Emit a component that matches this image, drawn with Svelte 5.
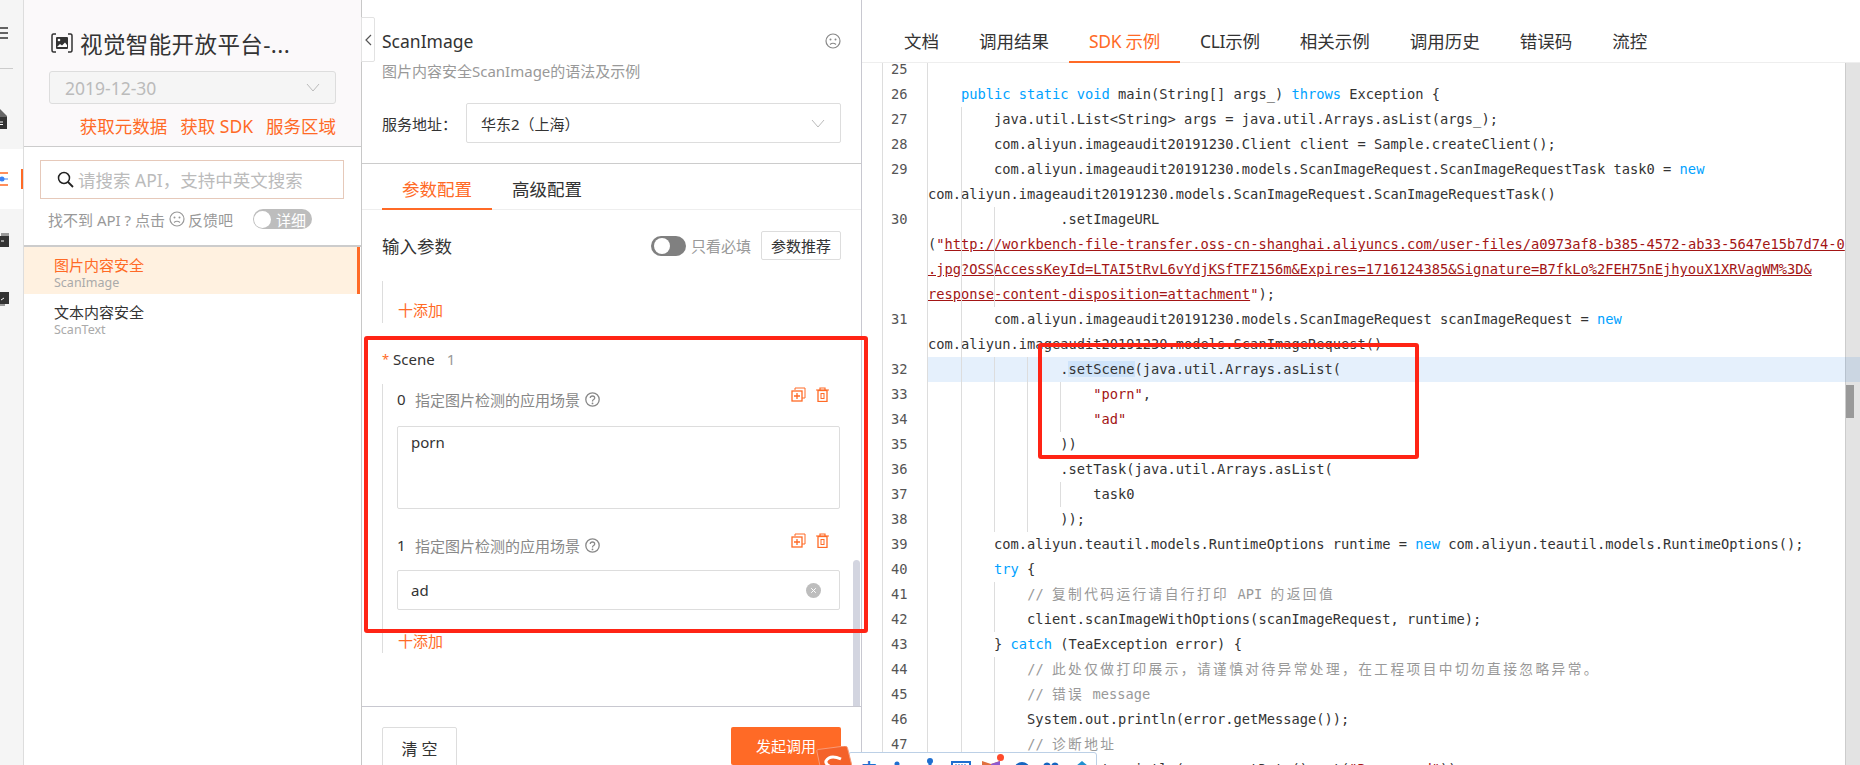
<script>
	const tabs = ['文档', '调用结果', 'SDK 示例', 'CLI示例', '相关示例', '调用历史', '错误码', '流控'];

	const url1 = 'http://workbench-file-transfer.oss-cn-shanghai.aliyuncs.com/user-files/a0973af8-b385-4572-ab33-5647e15b7d74-0';
	const url2 = '.jpg?OSSAccessKeyId=LTAI5tRvL6vYdjKSfTFZ156m&Expires=1716124385&Signature=B7fkLo%2FEH75nEjhyouX1XRVagWM%3D&';
	const url3 = 'response-content-disposition=attachment';

	// n: line number, g: indent guides, t: [class, text] tokens
	const rows = [
		{ n: 25, g: [], t: [] },
		{ n: 26, g: [], t: [['', '    '], ['k', 'public static void'], ['', ' main(String[] args_) '], ['k', 'throws'], ['', ' Exception {']] },
		{ n: 27, g: [1], t: [['', '        java.util.List<String> args = java.util.Arrays.asList(args_);']] },
		{ n: 28, g: [1], t: [['', '        com.aliyun.imageaudit20191230.Client client = Sample.createClient();']] },
		{ n: 29, g: [1], t: [['', '        com.aliyun.imageaudit20191230.models.ScanImageRequest.ScanImageRequestTask task0 = '], ['k', 'new']] },
		{ n: '', g: [1], t: [['', 'com.aliyun.imageaudit20191230.models.ScanImageRequest.ScanImageRequestTask()']] },
		{ n: 30, g: [1, 2], t: [['', '                .setImageURL']] },
		{ n: '', g: [1, 2], t: [['', '('], ['s', '"'], ['u', url1]] },
		{ n: '', g: [1, 2], t: [['u', url2]] },
		{ n: '', g: [1, 2], t: [['u', url3], ['s', '"'], ['', ');']] },
		{ n: 31, g: [1], t: [['', '        com.aliyun.imageaudit20191230.models.ScanImageRequest scanImageRequest = '], ['k', 'new']] },
		{ n: '', g: [1], t: [['', 'com.aliyun.imageaudit20191230.models.ScanImageRequest()']] },
		{ n: 32, g: [1, 2, 3], on: true, t: [['', '                .'], ['sel', 'setScene'], ['', '(java.util.Arrays.asList(']] },
		{ n: 33, g: [1, 2, 3, 4], t: [['', '                    '], ['s', '"porn"'], ['', ',']] },
		{ n: 34, g: [1, 2, 3, 4], t: [['', '                    '], ['s', '"ad"']] },
		{ n: 35, g: [1, 2, 3], t: [['', '                ))']] },
		{ n: 36, g: [1, 2, 3], t: [['', '                .setTask(java.util.Arrays.asList(']] },
		{ n: 37, g: [1, 2, 3, 4], t: [['', '                    task0']] },
		{ n: 38, g: [1, 2, 3], t: [['', '                ));']] },
		{ n: 39, g: [1], t: [['', '        com.aliyun.teautil.models.RuntimeOptions runtime = '], ['k', 'new'], ['', ' com.aliyun.teautil.models.RuntimeOptions();']] },
		{ n: 40, g: [1], t: [['', '        '], ['k', 'try'], ['', ' {']] },
		{ n: 41, g: [1, 2], t: [['', '            '], ['c', '// '], ['cj', '复制代码运行请自行打印'], ['c', ' API '], ['cj', '的返回值']] },
		{ n: 42, g: [1, 2], t: [['', '            client.scanImageWithOptions(scanImageRequest, runtime);']] },
		{ n: 43, g: [1], t: [['', '        } '], ['k', 'catch'], ['', ' (TeaException error) {']] },
		{ n: 44, g: [1, 2], t: [['', '            '], ['c', '// '], ['cj', '此处仅做打印展示，请谨慎对待异常处理，在工程项目中切勿直接忽略异常。']] },
		{ n: 45, g: [1, 2], t: [['', '            '], ['c', '// '], ['cj', '错误'], ['c', ' message']] },
		{ n: 46, g: [1, 2], t: [['', '            System.out.println(error.getMessage());']] },
		{ n: 47, g: [1, 2], t: [['', '            '], ['c', '// '], ['cj', '诊断地址']] },
		{ n: 48, g: [1, 2], t: [['', '            System.out.println(error.getData().get('], ['s', '"Recommend"'], ['', '));']] }
	];

	const items = [
		{ i: 0, value: 'porn', area: true },
		{ i: 1, value: 'ad', area: false }
	];
</script>

<div class="page">
	<nav class="rail">
		<svg class="rail-menu" width="8" height="12" viewBox="0 0 8 12"><path d="M0 1h8M0 6h8M0 11h8" stroke="#333" stroke-width="1.4" /></svg>
		<div class="rail-line"></div>
		<svg class="rail-doc" width="8" height="20" viewBox="0 0 8 20"><path d="M0 0l7 7v13H0z" fill="#666" /><path d="M0 8h7v12H0z" fill="#333" /><path d="M0 13h3M0 15.500h3" stroke="#fff" /></svg>
		<div class="rail-on">
			<svg width="8" height="14" viewBox="0 0 8 14"><path d="M0 1h8M0 13h8" stroke="#ff6a26" stroke-width="1.500" /><circle cx="2" cy="7" r="2.500" fill="#3b82f6" /><path d="M3 7h5" stroke="#3b82f6" /></svg>
			<span class="rail-bar"></span>
		</div>
		<svg class="rail-box" width="9" height="14" viewBox="0 0 9 14"><path d="M1 0h8v3H1z" fill="#999" /><path d="M0 3h9v11H0z" fill="#333" /><path d="M1 8h3" stroke="#fff" /></svg>
		<svg class="rail-box2" width="9" height="14" viewBox="0 0 9 14"><path d="M0 0h9v12H0z" fill="#333" /><path d="M0 12h5v2H0z" fill="#999" /><path d="M1 8l3-2" stroke="#fff" /></svg>
	</nav>

	<aside class="side">
		<header class="side-head">
			<div class="title">
				<svg width="22" height="22" viewBox="0 0 22 22" fill="none"><path d="M5 2H2.500Q1 2 1 4v14q0 2 1.500 2H5M17 2h2.500Q21 2 21 4v14q0 2-1.500 2H17" stroke="#333" stroke-width="1.500" /><rect x="5" y="5" width="12" height="12" rx="1" fill="#333" /><circle cx="8" cy="8" r="1.300" fill="#fff" /><path d="M6 15l3-3 2 1.500 3-3 2 2.500v2z" fill="#fff" /></svg>
				<span>视觉智能开放平台-...</span>
			</div>
			<div class="side-select">
				<span>2019-12-30</span>
				<svg width="14" height="9" viewBox="0 0 14 9" fill="none"><path d="M1 1l6 7 6-7" stroke="#bbb" /></svg>
			</div>
			<div class="links"><span>获取元数据</span><span>获取 SDK</span><span>服务区域</span></div>
		</header>
		<div class="finder">
			<div class="search">
				<svg width="17" height="17" viewBox="0 0 17 17" fill="none"><circle cx="7" cy="7" r="5.500" stroke="#222" stroke-width="1.500" /><path d="M11 11l5 5" stroke="#222" stroke-width="1.800" /></svg>
				<span>请搜索 API，支持中英文搜索</span>
			</div>
			<div class="hint">
				<span>找不到 API ? 点击</span>
				<svg class="face" width="16" height="16" viewBox="0 0 16 16" fill="none"><circle cx="8" cy="8" r="7" stroke="#999" stroke-width="1.200" /><circle cx="5.500" cy="6.500" r="1" fill="#999" /><circle cx="10.500" cy="6.500" r="1" fill="#999" /><path d="M5 11.500q3-2.500 6 0" stroke="#999" stroke-width="1.200" /></svg>
				<span>反馈吧</span>
				<div class="detail"><i></i><span>详细</span></div>
			</div>
		</div>
		<ul class="apis">
			<li class="active"><b>图片内容安全</b><small>ScanImage</small></li>
			<li><b>文本内容安全</b><small>ScanText</small></li>
		</ul>
	</aside>

	<main class="mid">
		<div class="collapse">
			<svg width="8" height="12" viewBox="0 0 8 12" fill="none"><path d="M7 1L2 6l5 5" stroke="#555" stroke-width="1.200" /></svg>
		</div>
		<section class="mid-head">
			<div class="mid-title">
				<span>ScanImage</span>
				<svg width="16" height="16" viewBox="0 0 16 16" fill="none"><circle cx="8" cy="8" r="7" stroke="#888" stroke-width="1.200" /><circle cx="5.500" cy="6.500" r="1" fill="#888" /><circle cx="10.500" cy="6.500" r="1" fill="#888" /><path d="M5 11.500q3-2.500 6 0" stroke="#888" stroke-width="1.200" /></svg>
			</div>
			<p class="mid-sub">图片内容安全ScanImage的语法及示例</p>
			<div class="address">
				<label for="region">服务地址：</label>
				<div class="address-box" id="region">
					<span>华东2（上海）</span>
					<svg width="14" height="9" viewBox="0 0 14 9" fill="none"><path d="M1 1l6 7 6-7" stroke="#bbb" /></svg>
				</div>
			</div>
		</section>
		<div class="conf-tabs">
			<span class="conf-tab on">参数配置</span>
			<span class="conf-tab">高级配置</span>
		</div>
		<section class="params">
			<div class="params-head">
				<h3>输入参数</h3>
				<div class="switch"><i></i></div>
				<span class="only">只看必填</span>
				<button class="recommend">参数推荐</button>
			</div>
			<div class="top-add"><span class="add">十添加</span></div>
			<div class="scene"><em>*</em><span>Scene</span><span class="count">1</span></div>
			<div class="scene-list">
				{#each items as item}
					<div class="item-head" class:second={item.i > 0}>
						<span class="idx">{item.i}</span>
						<span class="desc">指定图片检测的应用场景</span>
						<svg class="help" width="15" height="15" viewBox="0 0 15 15" fill="none"><circle cx="7.500" cy="7.500" r="6.700" stroke="#888" stroke-width="1.300" /><path d="M5.300 6q0-2 2.200-2t2.200 2q0 1-1.100 1.500T7.500 9.500" stroke="#888" stroke-width="1.300" /><circle cx="7.500" cy="11.400" r=".9" fill="#888" /></svg>
						<svg class="act" width="15" height="15" viewBox="0 0 15 15" fill="none"><path d="M4 3V1h10v10h-3" stroke="#ff6a26" /><rect x="1" y="4" width="10" height="10" stroke="#ff6a26" stroke-width="1.300" /><path d="M6 6v6M3 9h6" stroke="#ff6a26" stroke-width="1.300" /></svg>
						<svg class="act trash" width="13" height="15" viewBox="0 0 13 15" fill="none"><path d="M0 3h13M4 3V1h5v2" stroke="#ff6a26" stroke-width="1.200" /><rect x="2" y="3.500" width="9" height="11" stroke="#ff6a26" stroke-width="1.300" /><rect x="5" y="6.500" width="3" height="5" stroke="#ff6a26" /></svg>
					</div>
					{#if item.area}
						<div class="field area">{item.value}</div>
					{:else}
						<div class="field">
							<span>{item.value}</span>
							<svg width="15" height="15" viewBox="0 0 15 15" fill="none"><circle cx="7.500" cy="7.500" r="7.500" fill="#bdbdbd" /><path d="M5.200 5.200l4.600 4.600M9.800 5.200l-4.600 4.600" stroke="#fff" /></svg>
						</div>
					{/if}
				{/each}
				<div class="bottom-add"><span class="add">十添加</span></div>
			</div>
			<div class="mid-scroll"></div>
		</section>
		<footer class="mid-foot">
			<button class="clear">清 空</button>
			<button class="invoke">发起调用</button>
		</footer>
	</main>

	<section class="right">
		<div class="doc-tabs">
			{#each tabs as tab, i}
				<span class="doc-tab" class:on={i === 2} class:latin={i === 2 || i === 3}>{tab}</span>
			{/each}
		</div>
		<div class="code">
			<div class="code-scroll"><i></i></div>
			<div class="code-rows">
				{#each rows as row}
					<div class="row" class:on={row.on}>
						<span class="num">{row.n}</span>
						<span class="txt">{#each row.g as g}<i class="guide" style="left: {g * 32.9}px"></i>{/each}{#each row.t as tok}<span class={tok[0]}>{tok[1]}</span>{/each}</span>
					</div>
				{/each}
			</div>
		</div>
	</section>

	<!-- annotations drawn on top of the screenshot -->
	<div class="mark mark-form"></div>
	<div class="mark mark-code"></div>

	<!-- input method bar -->
	<svg class="ime-logo" width="38" height="20" viewBox="0 0 38 20"><path d="M3 6Q2 4 4 3.500L31 0q2 0 2.500 2L38 20H6z" fill="#f4622a" stroke="#f79a78" /><path d="M27 13Q16 8 12 15q-1 3 5 6" fill="none" stroke="#fff" stroke-width="3" /></svg>
	<div class="ime">
		<span class="ime-zh">中</span>
		<svg class="ime-icons" width="240" height="14" viewBox="0 0 240 14">
			<circle cx="48" cy="11" r="2.500" fill="#1f6fd0" />
			<circle cx="81" cy="8" r="3" fill="#1f6fd0" /><path d="M81 8v6" stroke="#1f6fd0" stroke-width="3" />
			<rect x="103" y="9" width="18" height="10" fill="none" stroke="#1f6fd0" stroke-width="2" /><path d="M106 12h12" stroke="#1f6fd0" stroke-dasharray="2 1" />
			<path d="M133 8l9 3 9-3v8h-18z" fill="#e0703e" /><path d="M142 11l9-3v8h-9z" fill="#8e5ad0" />
			<circle cx="173" cy="17" r="8" fill="#1565c0" />
			<circle cx="198" cy="13" r="3.500" fill="#1565c0" /><circle cx="206" cy="13" r="3.500" fill="#1565c0" />
			<path d="M233 8l6 5h-12z" fill="#1f8fd0" /><path d="M229 14h8v2h-8z" fill="#1f8fd0" />
		</svg>
		<span class="ime-dot"></span>
	</div>
</div>

<style>
	:global(body) {
		margin: 0;
		overflow: hidden;
		background: #fff;
	}

	.page {
		position: relative;
		display: flex;
		width: 1860px;
		height: 765px;
		overflow: hidden;
		font-family: "Noto Sans", "Noto Sans CJK SC", sans-serif;
		font-size: 15px;
		color: #333;
	}

	/* rail */
	.rail {
		flex: none;
		box-sizing: border-box;
		width: 24px;
		border-right: 1px solid #ddd;
		background: #f5f5f5;
		display: flex;
		flex-direction: column;
		align-items: flex-start;
	}
	.rail-menu {
		margin-top: 27px;
	}
	.rail-line {
		width: 13px;
		height: 1px;
		background: #ccc;
		margin-top: 29px;
	}
	.rail-doc {
		margin-top: 40px;
	}
	.rail-on {
		position: relative;
		width: 23px;
		height: 60px;
		margin-top: 20px;
		background: #fff;
		display: flex;
		align-items: center;
	}
	.rail-bar {
		position: absolute;
		right: 0;
		top: 20px;
		width: 2px;
		height: 20px;
		background: #ff6a26;
	}
	.rail-box {
		margin-top: 24px;
	}
	.rail-box2 {
		margin-top: 45px;
	}

	/* api list */
	.side {
		flex: none;
		box-sizing: border-box;
		width: 338px;
		border-right: 1px solid #c8c8c8;
	}
	.side-head {
		box-sizing: border-box;
		height: 147px;
		padding: 28px 25px 0;
		background: #fbf9fa;
		border-bottom: 1px solid #ccc;
	}
	.title {
		display: flex;
		align-items: center;
		gap: 7px;
		height: 30px;
		margin-left: 2px;
		font-size: 22.5px;
		color: #333;
		white-space: nowrap;
	}
	.title span {
		letter-spacing: 0.4px;
	}
	.side-select {
		box-sizing: border-box;
		display: flex;
		align-items: center;
		justify-content: space-between;
		height: 33px;
		margin-top: 13px;
		padding: 0 15px;
		background: #f5f5f5;
		border: 1px solid #ddd;
		border-radius: 3px;
		color: #bbb;
		font-size: 17.5px;
	}
	.links {
		display: flex;
		justify-content: flex-end;
		gap: 13px;
		height: 26px;
		margin-top: 8px;
		align-items: center;
		color: #ff6a26;
		font-size: 17.5px;
		white-space: nowrap;
	}
	.finder {
		box-sizing: border-box;
		height: 98px;
		padding: 13px 16px 0;
	}
	.search {
		box-sizing: border-box;
		display: flex;
		align-items: center;
		gap: 4px;
		width: 304px;
		height: 39px;
		padding-left: 16px;
		border: 1px solid #e6c9ba;
		color: #bbb;
		font-size: 17.5px;
		white-space: nowrap;
	}
	.hint {
		display: flex;
		align-items: center;
		height: 22px;
		margin-top: 9px;
		padding-left: 8px;
		color: #999;
		white-space: nowrap;
	}
	.face {
		margin: 0 3px 0 4px;
	}
	.detail {
		display: flex;
		align-items: center;
		box-sizing: border-box;
		width: 59px;
		height: 20px;
		margin-left: 20px;
		padding-left: 1px;
		border-radius: 10px;
		background: #bdbdbd;
		color: #fff;
		font-size: 15px;
	}
	.detail i {
		width: 17px;
		height: 17px;
		border-radius: 50%;
		background: #fff;
		margin-right: 5px;
	}
	.apis {
		list-style: none;
		margin: 0;
		padding: 0;
		border-top: 2px solid #ccc;
	}
	.apis li {
		box-sizing: border-box;
		height: 47px;
		padding: 9px 0 0 30px;
		margin-right: 1px;
	}
	.apis li.active {
		background: #fff1e0;
		border-right: 3px solid #ff6a26;
		color: #ff6a26;
	}
	.apis b {
		display: block;
		height: 19px;
		line-height: 19px;
		font-weight: 400;
		font-size: 15px;
	}
	.apis small {
		display: block;
		height: 15px;
		line-height: 15px;
		font-size: 12.5px;
		color: #aaa;
	}

	/* form column */
	.mid {
		position: relative;
		flex: none;
		box-sizing: border-box;
		width: 500px;
		border-right: 1px solid #c8c8d0;
		display: flex;
		flex-direction: column;
	}
	.collapse {
		position: absolute;
		left: -1px;
		top: 17px;
		box-sizing: border-box;
		width: 14px;
		height: 45px;
		background: #fff;
		border: 1px solid #e2e2e2;
		border-radius: 0 2px 2px 0;
		display: flex;
		align-items: center;
		justify-content: center;
	}
	.mid-head {
		box-sizing: border-box;
		flex: none;
		height: 164px;
		padding: 28px 20px 0;
		border-bottom: 1px solid #ccc;
	}
	.mid-title {
		display: flex;
		align-items: center;
		justify-content: space-between;
		height: 26px;
		font-size: 17.5px;
	}
	.mid-sub {
		height: 20px;
		line-height: 20px;
		margin: 7px 0 0;
		color: #999;
	}
	.address {
		display: flex;
		align-items: center;
		height: 40px;
		margin-top: 22px;
	}
	.address label {
		width: 84px;
	}
	.address-box {
		flex: 1;
		box-sizing: border-box;
		display: flex;
		align-items: center;
		justify-content: space-between;
		height: 40px;
		padding: 0 15px 0 14px;
		border: 1px solid #ddd;
		border-radius: 2px;
	}
	.conf-tabs {
		flex: none;
		box-sizing: border-box;
		display: flex;
		height: 46px;
		padding: 0 20px;
		border-bottom: 1px solid #eee;
		font-size: 17.5px;
	}
	.conf-tab {
		box-sizing: border-box;
		width: 110px;
		height: 46px;
		padding-top: 10px;
		line-height: 30px;
		text-align: center;
	}
	.conf-tab.on {
		color: #ff6a26;
		border-bottom: 2px solid #ff6a26;
	}
	.params {
		position: relative;
		flex: none;
		box-sizing: border-box;
		height: 496px;
		padding: 21px 20px 0;
		overflow: hidden;
	}
	.params-head {
		display: flex;
		align-items: center;
		height: 29px;
	}
	.params-head h3 {
		flex: 1;
		margin: 0;
		font-size: 17.5px;
		font-weight: 400;
	}
	.switch {
		box-sizing: border-box;
		width: 35px;
		height: 20px;
		padding: 2px 3px;
		border-radius: 10px;
		background: #808080;
	}
	.switch i {
		display: block;
		width: 16px;
		height: 16px;
		border-radius: 50%;
		background: #fff;
	}
	.only {
		margin: 0 10px 0 5px;
		color: #999;
	}
	.recommend {
		box-sizing: border-box;
		width: 80px;
		height: 29px;
		padding: 0;
		background: #fff;
		border: 1px solid #ddd;
		border-radius: 2px;
		font: inherit;
		color: #333;
	}
	.top-add {
		box-sizing: border-box;
		height: 42px;
		margin-top: 21px;
		padding: 18px 0 0 15px;
		border-left: 1px solid #ddd;
	}
	.add {
		display: block;
		height: 22px;
		line-height: 22px;
		color: #ff6a26;
		font-size: 15px;
	}
	.scene {
		display: flex;
		align-items: center;
		height: 24px;
		margin-top: 24px;
	}
	.scene em {
		width: 11px;
		color: #ff6a26;
		font-style: normal;
		font-size: 13px;
	}
	.scene .count {
		margin-left: 12px;
		color: #999;
	}
	.scene-list {
		box-sizing: border-box;
		height: 269px;
		margin-top: 13px;
		padding: 4px 0 0 14px;
		border-left: 1px solid #ddd;
	}
	.item-head {
		display: flex;
		align-items: center;
		height: 22px;
		padding-right: 12px;
	}
	.item-head.second {
		margin-top: 25px;
	}
	.idx {
		width: 18px;
	}
	.desc {
		color: #888;
	}
	.help {
		margin-left: 5px;
		margin-right: auto;
	}
	.act {
		align-self: flex-start;
		margin-top: -1px;
	}
	.trash {
		margin-left: 10px;
	}
	.field {
		box-sizing: border-box;
		display: flex;
		align-items: center;
		justify-content: space-between;
		width: 443px;
		height: 40px;
		margin-top: 14px;
		padding: 0 18px 0 13px;
		border: 1px solid #ddd;
		border-radius: 2px;
	}
	.field.area {
		height: 83px;
		margin-top: 16px;
		align-items: flex-start;
		padding-top: 4px;
		line-height: 22px;
	}
	.bottom-add {
		margin: 20px 0 0 1px;
	}
	.mid-scroll {
		position: absolute;
		right: 1px;
		top: 350px;
		width: 7px;
		height: 146px;
		border-radius: 4px 4px 0 0;
		background: #d3d5e0;
	}
	.mid-foot {
		flex: none;
		display: flex;
		justify-content: space-between;
		align-items: flex-start;
		padding: 20px 20px 0;
		border-top: 1px solid #c8c8d0;
	}
	.clear {
		width: 75px;
		height: 42px;
		padding: 0;
		background: #fff;
		border: 1px solid #ddd;
		border-radius: 2px;
		font: inherit;
		font-size: 16px;
		color: #333;
	}
	.invoke {
		width: 110px;
		height: 38px;
		padding: 0 0 2px;
		background: #ff6a26;
		border: 0;
		border-radius: 2px;
		font: inherit;
		color: #fff;
	}

	/* sdk sample */
	.right {
		flex: 1;
		min-width: 0;
		display: flex;
		flex-direction: column;
	}
	.doc-tabs {
		flex: none;
		box-sizing: border-box;
		display: flex;
		align-items: flex-end;
		height: 63px;
		padding-left: 22px;
		border-bottom: 1px solid #eee;
	}
	.doc-tab {
		box-sizing: border-box;
		height: 41px;
		margin-bottom: -1px;
		padding: 0 20px;
		line-height: 39px;
		font-size: 17.5px;
		white-space: nowrap;
	}
	.doc-tab.latin {
		letter-spacing: -0.3px;
	}
	.doc-tab.on {
		color: #ff6a26;
		border-bottom: 2px solid #ff6a26;
	}
	.code {
		position: relative;
		flex: 1;
		min-height: 0;
		margin-left: 20px;
		overflow: hidden;
		border-left: 1px solid #ddd;
	}
	.code-scroll {
		position: absolute;
		top: 0;
		right: 0;
		bottom: 0;
		box-sizing: border-box;
		width: 15px;
		background: #e3e3e3;
		border-left: 1px solid #ccc;
	}
	.code-scroll i {
		position: absolute;
		left: 0;
		top: 322px;
		width: 8px;
		height: 33px;
		background: #999;
	}
	.code-rows {
		position: relative;
		margin-top: -6px;
		font-family: "DejaVu Sans Mono", "Noto Sans CJK SC", monospace;
		font-size: 13.72px;
		color: #333;
	}
	.row {
		display: flex;
		height: 25px;
		line-height: 25px;
		white-space: pre;
	}
	.row.on {
		background: rgba(0, 110, 230, 0.1);
	}
	.num {
		flex: none;
		box-sizing: border-box;
		width: 45px;
		padding-left: 8px;
		border-right: 1px solid #ddd;
		color: #555;
	}
	.row.on .num {
		background: #fff;
	}
	.txt {
		position: relative;
		flex: 1;
	}
	.guide {
		position: absolute;
		top: 0;
		bottom: 0;
		width: 1px;
		background: #ddd;
	}
	.k {
		color: #00a2ff;
	}
	.s {
		color: #a31515;
	}
	.u {
		color: #a31515;
		text-decoration: underline;
	}
	.c {
		color: #999;
	}
	.cj {
		color: #999;
		letter-spacing: 2.4px;
	}
	.sel {
		background: #cfe4fa;
	}

	.mark {
		position: absolute;
		box-sizing: border-box;
		border: 4px solid #ff2415;
		border-radius: 3px;
	}
	.mark-form {
		left: 364px;
		top: 336px;
		width: 504px;
		height: 297px;
	}
	.mark-code {
		left: 1038px;
		top: 343px;
		width: 381px;
		height: 116px;
	}

	.ime-logo {
		position: absolute;
		left: 814px;
		top: 746px;
		z-index: 2;
	}
	.ime {
		position: absolute;
		left: 848px;
		top: 752px;
		box-sizing: border-box;
		width: 249px;
		height: 30px;
		background: #fff;
		border: 1px solid #bcd0e6;
		border-radius: 3px;
	}
	.ime-zh {
		position: absolute;
		left: 12px;
		top: 3px;
		color: #1f6fd0;
		font-size: 16px;
		font-weight: 700;
	}
	.ime-icons {
		position: absolute;
		left: 0;
		top: 0;
		overflow: visible;
	}
	.ime-dot {
		position: absolute;
		left: 148px;
		top: 3px;
		width: 7px;
		height: 7px;
		margin-top: -2px;
		border-radius: 50%;
		background: #ff4b2b;
	}
</style>
